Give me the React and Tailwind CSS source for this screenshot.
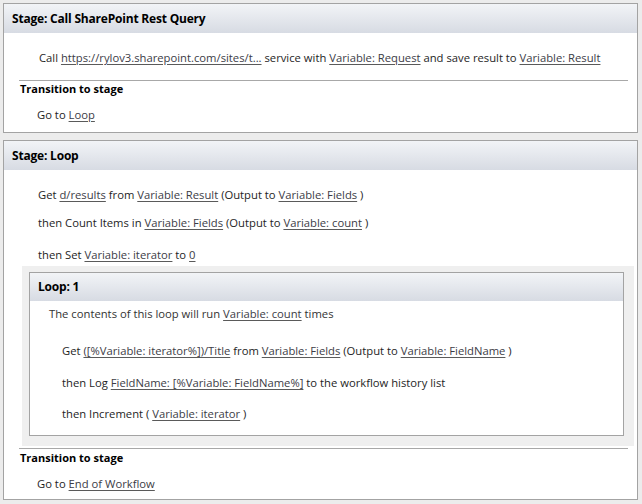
import React from 'react';

const font = { fontFamily: '"Open Sans", "Noto Sans", sans-serif' };

function L({ children }) {
    return <span className="underline underline-offset-2 decoration-[#5a5a5a] text-[#3c3c46]">{children}</span>;
}

function Row({ className = '', children }) {
    return <div className={`h-5 leading-5 whitespace-nowrap ${className}`}>{children}</div>;
}

function Header({ children, className = '' }) {
    return (
        <div className={`bg-gradient-to-b from-[#f2f4f7] to-[#d7dbe3] font-bold text-[12px] tracking-[-0.2px] text-black pl-2 flex items-center ${className}`}>
            {children}
        </div>
    );
}

function TransitionTitle() {
    return <div className="h-4 leading-4 ml-4 font-bold text-[11px] text-black">Transition to stage</div>;
}

export default function App() {
    return (
        <div className="w-[642px] h-[504px] bg-[#ececec] pt-[3px] px-[3px] text-[11.25px] text-[#1e1e1e]" style={font}>
            {/* stage 1 */}
            <div className="w-[635px] border border-[#a3a3a3] bg-white pb-[7px]">
                <Header className="h-[29px]">Stage: Call SharePoint Rest Query</Header>
                <Row className="mt-[15px] ml-[35px]">
                    Call <L>https://rylov3.sharepoint.com/sites/t...</L> service with <L>Variable: Request</L> and save result to <L>Variable: Result</L>
                </Row>
                <div className="h-px bg-[#a8a8a8] ml-[15px] mr-[9px] mt-[12px]" />
                <TransitionTitle />
                <Row className="mt-2 ml-[33px]">Go to <L>Loop</L></Row>
            </div>

            {/* stage 2 */}
            <div className="w-[635px] mt-[7px] border border-[#a3a3a3] bg-white pb-[5px]">
                <Header className="h-[29px]">Stage: Loop</Header>
                <div className="ml-[34px]">
                    <Row className="mt-[15px]">
                        Get <L>d/results</L> from <L>Variable: Result</L> (Output to <L>Variable: Fields</L> )
                    </Row>
                    <Row className="mt-2">
                        then Count Items in <L>Variable: Fields</L> (Output to <L>Variable: count</L> )
                    </Row>
                    <Row className="mt-3">
                        then Set <L>Variable: iterator</L> to <L>0</L>
                    </Row>
                </div>

                {/* loop block */}
                <div className="ml-[18px] mr-[3px] mt-[1px] bg-[#efefef] pt-[6px] pl-[7px] pr-[10px] pb-[10px]">
                    <div className="border border-[#a3a3a3] bg-white pb-[11px]">
                        <Header className="h-[28px]">Loop: 1</Header>
                        <Row className="mt-[3px] ml-[19px] text-[#333]">
                            The contents of this loop will run <L>Variable: count</L> times
                        </Row>
                        <div className="ml-[32px]">
                            <Row className="mt-[17px]">
                                Get <L>([%Variable: iterator%])/Title</L> from <L>Variable: Fields</L> (Output to <L>Variable: FieldName</L> )
                            </Row>
                            <Row className="mt-3">
                                then Log <L>FieldName: [%Variable: FieldName%]</L> to the workflow history list
                            </Row>
                            <Row className="mt-[11px]">
                                then Increment ( <L>Variable: iterator</L> )
                            </Row>
                        </div>
                    </div>
                </div>

                <div className="h-px bg-[#a8a8a8] ml-[15px] mr-[9px] mt-[2px]" />
                <div className="mt-px"><TransitionTitle /></div>
                <Row className="mt-2 ml-[33px]">Go to <L>End of Workflow</L></Row>
            </div>
        </div>
    );
}
